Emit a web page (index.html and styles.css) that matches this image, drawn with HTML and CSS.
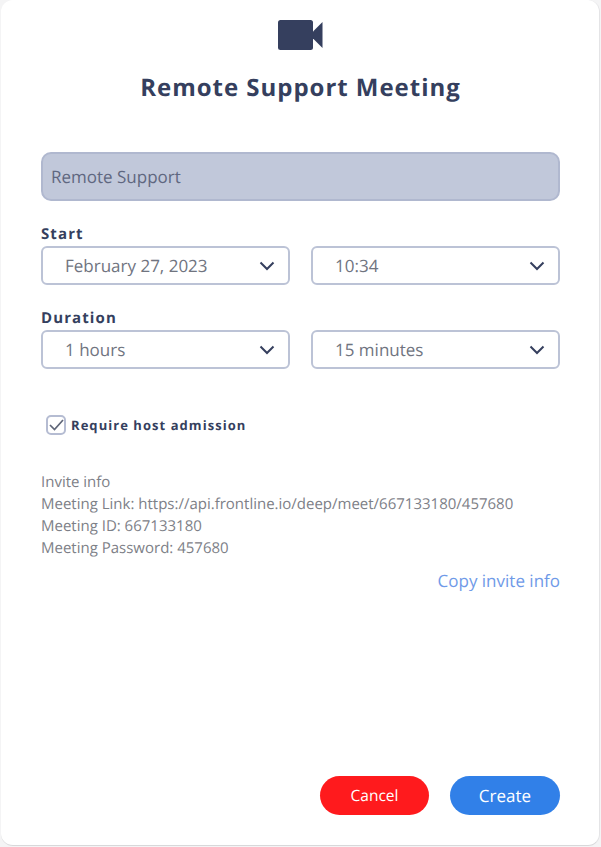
FILE: index.html
```html
<!DOCTYPE html>
<html lang="en">
<head>
    <meta charset="UTF-8">
    <meta name="viewport" content="width=device-width, initial-scale=1.0">
    <title>Remote Support Meeting</title>
    <link rel="stylesheet" href="styles.css">
</head>
<body>
    <div class="card">
        <div class="head">
            <svg class="cam" width="45" height="30" viewBox="0 0 45 30">
                <rect x="0" y="0" width="35" height="30" rx="2.5" fill="#353f5e"/>
                <path d="M35 11.5 L44.5 2 V28 L35 18.5 Z" fill="#353f5e"/>
            </svg>
            <h1>Remote Support Meeting</h1>
        </div>

        <div class="name-input">Remote Support</div>

        <div class="label">Start</div>
        <div class="row">
            <div class="select"><span>February 27, 2023</span><svg class="chev" width="16" height="10" viewBox="0 0 16 10"><path d="M1.5 1.5 L8 8 L14.5 1.5" fill="none" stroke="#353f5e" stroke-width="2"/></svg></div>
            <div class="select"><span>10:34</span><svg class="chev" width="16" height="10" viewBox="0 0 16 10"><path d="M1.5 1.5 L8 8 L14.5 1.5" fill="none" stroke="#353f5e" stroke-width="2"/></svg></div>
        </div>

        <div class="label">Duration</div>
        <div class="row">
            <div class="select"><span>1 hours</span><svg class="chev" width="16" height="10" viewBox="0 0 16 10"><path d="M1.5 1.5 L8 8 L14.5 1.5" fill="none" stroke="#353f5e" stroke-width="2"/></svg></div>
            <div class="select"><span>15 minutes</span><svg class="chev" width="16" height="10" viewBox="0 0 16 10"><path d="M1.5 1.5 L8 8 L14.5 1.5" fill="none" stroke="#353f5e" stroke-width="2"/></svg></div>
        </div>

        <div class="check-row">
            <div class="checkbox"><svg width="15" height="12" viewBox="0 0 15 12"><path d="M1 6 L5.5 10.5 L14 1" fill="none" stroke="#5f6678" stroke-width="1.7"/></svg></div>
            <span class="check-label">Require host admission</span>
        </div>

        <div class="invite">
            <div>Invite info</div>
            <div>Meeting Link: https://api.frontline.io/deep/meet/667133180/457680</div>
            <div>Meeting ID: 667133180</div>
            <div>Meeting Password: 457680</div>
        </div>
        <div class="copy">Copy invite info</div>

        <div class="actions">
            <div class="btn btn-cancel">Cancel</div>
            <div class="btn btn-create">Create</div>
        </div>
    </div>
</body>
</html>
```

FILE: styles.css
```css
* {
    margin: 0;
    padding: 0;
    box-sizing: border-box;
}

html, body {
    background: #f4f4f5;
}

body {
    width: 601px;
    height: 847px;
    font-family: "Open Sans", "Liberation Sans", sans-serif;
    text-rendering: geometricPrecision;
    overflow: hidden;
}

.card {
    width: 599px;
    height: 846px;
    margin-left: 1px;
    padding: 0 39px 0 40px;
    background: #fff;
    border-radius: 12px;
    border-right: 1px solid #e4e4e6;
    border-bottom: 1px solid #d8d8da;
    display: flex;
    flex-direction: column;
}

.head {
    display: flex;
    flex-direction: column;
    align-items: center;
    padding-top: 20px;
}

.cam {
    display: block;
}

.head h1 {
    margin-top: 20px;
    font-size: 24px;
    line-height: 36px;
    font-weight: 700;
    letter-spacing: 0.97px;
    color: #353f5e;
}

.name-input {
    margin-top: 46px;
    height: 49px;
    padding-left: 8px;
    background: #c1c8da;
    border: 2px solid #b0b8cf;
    border-radius: 10px;
    font-size: 17px;
    line-height: 46px;
    color: #5f6780;
}

.label {
    margin-top: 23px;
    font-size: 15px;
    line-height: 20px;
    font-weight: 700;
    letter-spacing: 1.1px;
    color: #353f5e;
}

.row {
    margin-top: 2px;
    display: flex;
    gap: 21px;
}

.select {
    width: 249px;
    height: 39px;
    padding: 0 13px 0 22px;
    border: 2px solid #bcc3d6;
    border-radius: 6px;
    display: flex;
    align-items: center;
    justify-content: space-between;
    font-size: 17px;
    color: #70747f;
}

.check-row {
    margin-top: 46px;
    padding-left: 5px;
    display: flex;
    align-items: center;
    gap: 5px;
}

.checkbox {
    width: 20px;
    height: 20px;
    border: 2px solid #b5bcd2;
    border-radius: 5px;
    display: flex;
    align-items: center;
    justify-content: center;
}

.check-label {
    font-size: 13px;
    font-weight: 700;
    letter-spacing: 1.05px;
    color: #353f5e;
}

.invite {
    margin-top: 36px;
    font-size: 15px;
    line-height: 22px;
    color: #7d8087;
}

.copy {
    margin-top: 10px;
    text-align: right;
    font-size: 17px;
    line-height: 24px;
    color: #6f9ae8;
}

.actions {
    margin-top: auto;
    margin-bottom: 30px;
    display: flex;
    justify-content: flex-end;
    gap: 21px;
}

.btn {
    height: 39px;
    border-radius: 20px;
    color: #fff;
    font-size: 15.5px;
    line-height: 39px;
    text-align: center;
}

.btn-cancel {
    width: 109px;
    background: #ff1a1d;
}

.btn-create {
    width: 110px;
    background: #3180e8;
    font-size: 17px;
}
```
